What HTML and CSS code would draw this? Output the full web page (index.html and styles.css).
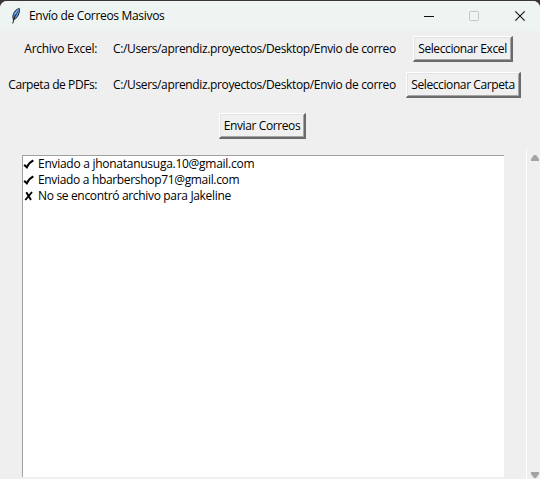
FILE: index.html
```
<!DOCTYPE html>
<html lang="es">
<head>
<meta charset="utf-8">
<title>Envío de Correos Masivos</title>
<link rel="stylesheet" href="styles.css">
</head>
<body>
<div class="window">
  <header class="titlebar">
    <svg class="feather" width="12" height="18" viewBox="0 0 12 18">
      <path d="M9.3 1.4C6 2.3 3.4 5 2.8 9.3L3.2 12.6L5.8 11.6C8.5 9 10 5 9.3 1.4Z" fill="#4f8fe0" stroke="#26303c"/>
      <path d="M8 3.5L5 9L2.7 16.5" fill="none" stroke="#1c1c1c"/>
      <path d="M8.3 2.5L5 7.5" stroke="#9cc4f0"/>
    </svg>
    <h1 class="title">Envío de Correos Masivos</h1>
    <svg class="controls" width="106" height="14" viewBox="0 0 106 14" fill="none">
      <path d="M0 7.5H10" stroke="#111"/>
      <rect x="45.5" y="2.5" width="9" height="9" rx="1" stroke="#c3c8c7"/>
      <path d="M91.3 2.3L100.7 11.7M100.7 2.3L91.3 11.7" stroke="#111" stroke-width="1.1"/>
    </svg>
  </header>
  <main class="content">
    <section class="form">
      <div class="label">Archivo Excel:</div>
      <div class="path">C:/Users/aprendiz.proyectos/Desktop/Envio de correo</div>
      <button class="btn btn-excel">Seleccionar Excel</button>
      <div class="label label-folder">Carpeta de PDFs:</div>
      <div class="path">C:/Users/aprendiz.proyectos/Desktop/Envio de correo</div>
      <button class="btn btn-folder">Seleccionar Carpeta</button>
    </section>
    <div class="actions"><button class="btn btn-send">Enviar Correos</button></div>
    <section class="results">
      <ul class="list">
        <li class="wide"><svg class="mark" viewBox="0 0 12 12"><path d="M1.2 6.8L3.8 9.3C5.4 6.2 7.4 3.8 10.4 2.4" fill="none" stroke="#000" stroke-width="2.1"/></svg><span>Enviado a jhonatanusuga.10@gmail.com</span></li>
        <li><svg class="mark" viewBox="0 0 12 12"><path d="M1.2 6.8L3.8 9.3C5.4 6.2 7.4 3.8 10.4 2.4" fill="none" stroke="#000" stroke-width="2.1"/></svg><span>Enviado a hbarbershop71@gmail.com</span></li>
        <li><svg class="mark" viewBox="0 0 12 12"><path d="M3.3 2.3L8 10M9 2L2.3 10" fill="none" stroke="#000" stroke-width="1.9"/></svg><span>No se encontró archivo para Jakeline</span></li>
      </ul>
      <div class="scrollbar">
        <svg width="8" height="6" viewBox="0 0 8 6"><path d="M3 0H5L8 4V6H0V4Z" fill="#a3a3a3"/></svg>
        <svg width="8" height="6" viewBox="0 0 8 6"><path d="M0 0H8V2L5 6H3L0 2Z" fill="#a3a3a3"/></svg>
      </div>
    </section>
  </main>
</div>
</body>
</html>
```
FILE: styles.css
```
* { box-sizing: border-box; }
body {
  margin: 0;
  background: #3a3537;
  color: #000;
  font: 12px/16px "Open Sans", "Noto Sans", sans-serif;
  overflow: hidden;
}
.window {
  display: flex;
  flex-direction: column;
  width: 540px;
  height: 478px;
  margin-top: 1px;
  background: #efefef;
  border-radius: 7px 7px 0 0;
  overflow: hidden;
}
.titlebar {
  display: flex;
  align-items: center;
  flex: 0 0 30px;
  padding: 0 10px;
  background: #edf4f2;
}
.title {
  flex: 1;
  margin: 0 0 0 7px;
  font-size: 12px;
  font-weight: 400;
  letter-spacing: -0.32px;
}
.content { display: flex; flex-direction: column; flex: 1; }
.form {
  display: grid;
  grid-template-columns: 97px 284px 133px;
  grid-template-rows: 26px 26px;
  column-gap: 16px;
  row-gap: 10px;
  padding-top: 5px;
  align-items: center;
}
.form .btn { justify-self: start; }
.label {
  text-align: right;
  white-space: nowrap;
  letter-spacing: -0.28px;
}
.label-folder { letter-spacing: -0.42px; }
.path {
  white-space: nowrap;
  letter-spacing: -0.36px;
}
.btn {
  height: 26px;
  padding: 0;
  border: 2px solid;
  border-color: #fff #6b6b6b #6b6b6b #fff;
  border-width: 1px 2px 2px 1px;
  background: #f0f0f0;
  box-shadow: inset 1px 1px #e3e3e3, inset -1px -1px #a5a5a5;
  color: #000;
  font: inherit;
  letter-spacing: -0.4px;
  white-space: nowrap;
}
.btn-excel { width: 100px; }
.btn-folder { width: 115px; margin-left: -7px; }
.btn-send { width: 87px; }
.actions { padding: 15px 0 0 219px; }
.results {
  display: flex;
  justify-content: space-between;
  flex: 1;
  padding-top: 10px;
}
.list {
  width: 482px;
  height: 322px;
  margin: 6px 0 0 22px;
  padding: 0;
  border-top: 1px solid #a0a0a0;
  border-left: 1px solid #a0a0a0;
  background: #fff;
  list-style: none;
}
.list li {
  display: flex;
  align-items: center;
  height: 16px;
  white-space: nowrap;
  letter-spacing: -0.33px;
}
.list .wide { letter-spacing: -0.27px; }
.mark { width: 12px; height: 12px; margin-right: 3px; }
.scrollbar {
  display: flex;
  flex-direction: column;
  justify-content: space-between;
  width: 14px;
  padding: 6px 0 1px 4px;
  border-left: 1px solid #fff;
}
```
